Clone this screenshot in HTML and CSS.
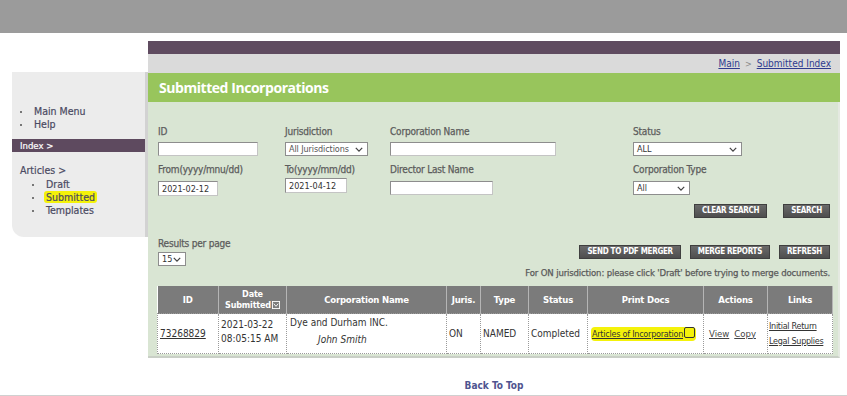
FILE: index.html
```html
<!DOCTYPE html>
<html>
<head>
<meta charset="utf-8">
<title>Submitted Incorporations</title>
<link rel="stylesheet" href="styles.css">
</head>
<body>
<div class="topbar"></div>
<div class="layout">
  <aside class="sidebar">
    <ul class="menu">
      <li>Main Menu</li>
      <li>Help</li>
    </ul>
    <div class="index-bar">Index &gt;</div>
    <div class="articles">Articles &gt;</div>
    <ul class="submenu">
      <li>Draft</li>
      <li><span class="hl">Submitted</span></li>
      <li>Templates</li>
    </ul>
  </aside>
  <main class="panel">
    <div class="purple"></div>
    <div class="crumbs"><a href="#">Main</a><span class="sep">&gt;</span><a href="#">Submitted Index</a></div>
    <h1 class="title">Submitted Incorporations</h1>
    <div class="formarea">
      <div class="grid">
        <label class="lbl">ID</label>
        <label class="lbl">Jurisdiction</label>
        <label class="lbl">Corporation Name</label>
        <label class="lbl">Status</label>

        <div class="cell"><span class="input w100"></span></div>
        <div class="cell"><span class="select w83 small">All Jurisdictions<svg class="chev" viewBox="0 0 10 6"><path d="M1 1 L5 5 L9 1" /></svg></span></div>
        <div class="cell"><span class="input w166"></span></div>
        <div class="cell"><span class="select w109">ALL<svg class="chev" viewBox="0 0 10 6"><path d="M1 1 L5 5 L9 1" /></svg></span></div>

        <label class="lbl">From(yyyy/mnu/dd)</label>
        <label class="lbl">To(yyyy/mm/dd)</label>
        <label class="lbl">Director Last Name</label>
        <label class="lbl">Corporation Type</label>

        <div class="cell"><span class="input w60 val">2021-02-12</span></div>
        <div class="cell up"><span class="input w62 val">2021-04-12</span></div>
        <div class="cell"><span class="input w103"></span></div>
        <div class="cell"><span class="select w57">All<svg class="chev" viewBox="0 0 10 6"><path d="M1 1 L5 5 L9 1" /></svg></span></div>
      </div>
      <div class="btnrow search-row">
        <span class="btn">CLEAR SEARCH</span>
        <span class="btn">SEARCH</span>
      </div>
      <div class="results">
        <div class="rpp">
          <div class="lbl">Results per page</div>
          <span class="select w28">15<svg class="chev" viewBox="0 0 10 6"><path d="M1 1 L5 5 L9 1" /></svg></span>
        </div>
        <div class="btnrow merge-row">
          <span class="btn">SEND TO PDF MERGER</span>
          <span class="btn">MERGE REPORTS</span>
          <span class="btn">REFRESH</span>
        </div>
      </div>
      <p class="note">For ON jurisdiction: please click 'Draft' before trying to merge documents.</p>
      <table class="tbl">
        <colgroup>
          <col class="c-id"><col class="c-date"><col class="c-corp"><col class="c-juris"><col class="c-type"><col class="c-status"><col class="c-docs"><col class="c-actions"><col class="c-links">
        </colgroup>
        <thead>
          <tr>
            <th>ID</th>
            <th class="date">Date<br>Submitted<svg class="sort" viewBox="0 0 9 9"><rect x="0.5" y="0.5" width="8" height="8" fill="none" stroke="#fff" stroke-width="1"/><path d="M2 3 L4.5 6 L7 3" fill="none" stroke="#fff" stroke-width="1"/></svg></th>
            <th>Corporation Name</th>
            <th>Juris.</th>
            <th>Type</th>
            <th>Status</th>
            <th>Print Docs</th>
            <th>Actions</th>
            <th>Links</th>
          </tr>
        </thead>
        <tbody>
          <tr>
            <td><a href="#">73268829</a></td>
            <td><span class="dtin">2021-03-22<br>08:05:15 AM</span></td>
            <td class="corp">Dye and Durham INC.<br><em>John Smith</em></td>
            <td>ON</td>
            <td>NAMED</td>
            <td>Completed</td>
            <td class="docs"><span class="hl2"><a href="#">Articles of Incorporation</a><span class="chk"></span></span></td>
            <td class="actions"><a href="#">View</a><a href="#">Copy</a></td>
            <td class="links"><a href="#">Initial Return</a><br><a href="#">Legal Supplies</a></td>
          </tr>
        </tbody>
      </table>
    </div>
    <div class="backtop"><a href="#">Back To Top</a></div>
  </main>
</div>
<div class="bottomline"></div>
</body>
</html>
```

FILE: styles.css
```css
html, body {
  margin: 0;
  padding: 0;
  background: #ffffff;
  font-family: "DejaVu Sans Condensed", "DejaVu Sans", sans-serif;
  font-stretch: condensed;
  color: #3e3e3e;
}

.topbar {
  height: 33px;
  background: #9b9b9b;
}

.layout {
  display: flex;
  align-items: flex-start;
  padding-left: 12px;
  margin-top: 8px;
}

/* Sidebar */
.sidebar {
  width: 133px;
  height: 165px;
  margin-top: 31px;
  background: #ececec;
  border-right: 3px solid #d2d2d2;
  border-bottom-left-radius: 12px;
  font-size: 10.5px;
  color: #4a4a62;
  -webkit-text-stroke: 0.2px #4a4a62;
}

.menu {
  list-style: none;
  margin: 0;
  padding: 33px 0 0 8px;
}

.menu li,
.submenu li {
  position: relative;
  line-height: 13px;
  padding-left: 14px;
}

.menu li::before,
.submenu li::before {
  content: "";
  position: absolute;
  left: 0;
  top: 6px;
  width: 2px;
  height: 2px;
  background: #777;
}

.index-bar {
  margin-top: 8px;
  height: 13px;
  line-height: 13px;
  background: #5e4a5f;
  color: #ffffff;
  -webkit-text-stroke: 0.2px #ffffff;
  font-size: 9.5px;
  padding-left: 8px;
}

.articles {
  padding-left: 8px;
  margin-top: 12px;
  line-height: 13px;
}

.submenu {
  list-style: none;
  margin: 0;
  padding: 1px 0 0 20px;
}

.hl {
  background: #f4f20a;
  border-radius: 3px;
  padding: 0 2px;
  margin-left: -2px;
}

/* Main panel */
.panel {
  width: 692px;
}

.purple {
  height: 13px;
  background: #5f4b60;
}

.crumbs {
  height: 19px;
  background: #dadada;
  text-align: right;
  font-size: 10px;
  line-height: 19px;
  padding-right: 9px;
}

.crumbs a {
  color: #2e3b8f;
}

.crumbs .sep {
  color: #888;
  margin: 0 5px;
  font-size: 9px;
}

.title {
  margin: 0;
  height: 29px;
  line-height: 30px;
  background: #98c55c;
  color: #ffffff;
  font-size: 14px;
  font-weight: bold;
  padding-left: 11px;
  font-family: "Open Sans", "DejaVu Sans", sans-serif;
  font-stretch: normal;
  letter-spacing: -0.45px;
}

.formarea {
  background: #d9e5d3;
  border-right: 2px solid #e4e9e1;
  border-bottom: 2px solid #c9cfc6;
  padding: 23px 8px 2px 10px;
}

.grid {
  display: grid;
  grid-template-columns: 127px 105px 243px 1fr;
  grid-template-rows: 13px 18px 20px 22px;
  align-items: start;
}

.lbl {
  font-size: 10px;
  color: #5c5c5c;
  -webkit-text-stroke: 0.25px #5c5c5c;
  line-height: 13px;
  letter-spacing: -0.2px;
}

.grid .lbl:nth-child(n+9) {
  margin-top: 7px;
}

.cell {
  padding-top: 4px;
}

.grid .cell:nth-child(n+13) {
  padding-top: 5px;
}

.grid .cell.up {
  padding-top: 2px;
}

.input,
.select {
  display: flex;
  align-items: center;
  box-sizing: border-box;
  height: 14px;
  background: #ffffff;
  border: 1px solid #8d8d8d;
  border-right-color: #c4c4c4;
  border-bottom-color: #c4c4c4;
  font-size: 9px;
  color: #333;
  padding-left: 3px;
}

.input.val {
  height: 15px;
}

.select {
  justify-content: space-between;
  padding-right: 4px;
  border-color: #8d8d8d;
}

.select.small {
  font-size: 9px;
  color: #555;
  letter-spacing: -0.1px;
}

.chev {
  width: 8px;
  height: 5px;
  fill: none;
  stroke: #444;
  stroke-width: 1.6;
  flex: none;
}

.w100 { width: 100px; }
.w83 { width: 83px; }
.w166 { width: 166px; }
.w109 { width: 109px; }
.w60 { width: 60px; }
.w62 { width: 62px; }
.w103 { width: 103px; }
.w57 { width: 57px; }
.w28 { width: 28px; }

.btnrow {
  display: flex;
  justify-content: flex-end;
}

.btn {
  display: inline-block;
  height: 12px;
  line-height: 12px;
  background: linear-gradient(#6a6a6a, #4e4e4e);
  border: 1px solid #3f3f3f;
  color: #ffffff;
  font-size: 8px;
  font-weight: bold;
  padding: 0 7px;
  letter-spacing: -0.3px;
}

.search-row {
  gap: 16px;
  margin-top: 6px;
}

.results {
  display: flex;
  justify-content: space-between;
  align-items: flex-start;
  margin-top: 19px;
}

.rpp .select {
  margin-top: 2px;
}

.merge-row {
  gap: 9px;
  margin-top: 8px;
}

.note {
  margin: 1px 0 0 0;
  text-align: right;
  font-size: 9.5px;
  color: #5a5a5a;
  -webkit-text-stroke: 0.25px #5a5a5a;
  line-height: 12px;
  letter-spacing: -0.15px;
}

/* Table */
.tbl {
  margin-top: 7px;
  width: 675px;
  margin-left: -1px;
  border-collapse: collapse;
  table-layout: fixed;
  background: #ffffff;
}

.c-id { width: 61px; }
.c-date { width: 68px; }
.c-corp { width: 160px; }
.c-juris { width: 34px; }
.c-type { width: 48px; }
.c-status { width: 59px; }
.c-docs { width: 116px; }
.c-actions { width: 64px; }
.c-links { width: 65px; }

.tbl th {
  height: 27px;
  background: #7b7b7b;
  color: #ffffff;
  font-size: 9.5px;
  font-weight: bold;
  border-right: 1px solid #b5b5b5;
  padding: 0;
  line-height: 11px;
  letter-spacing: -0.2px;
}

.tbl th.date {
  font-size: 9px;
}

.sort {
  width: 8px;
  height: 8px;
  vertical-align: -1px;
  margin-left: 1px;
}

.tbl td {
  height: 37px;
  border: 1px dotted #9a9a9a;
  font-size: 10px;
  color: #333;
  padding: 0 2px;
  line-height: 14px;
  vertical-align: middle;
  white-space: nowrap;
  overflow: hidden;
}

.tbl td a {
  color: #333;
}

.dtin {
  display: block;
  margin-bottom: 4px;
}

.tbl td.corp {
  vertical-align: top;
  padding-top: 2px;
  padding-left: 3px;
}

.tbl td.corp em {
  display: inline-block;
  padding-left: 28px;
  margin-top: 3px;
}

.tbl td.docs {
  padding: 0 1px 0 3px;
}

.hl2 {
  background: #f4f20a;
  border-radius: 4px;
  padding: 2px 1px;
  font-size: 9px;
  letter-spacing: -0.25px;
}

.hl2 a {
  color: #333;
}

.chk {
  display: inline-block;
  width: 9px;
  height: 9px;
  border: 1px solid #333;
  border-radius: 2px;
  vertical-align: -1px;
  margin-left: 1px;
}

.tbl td.actions {
  font-size: 9.5px;
}

.tbl td.actions a {
  margin-left: 3px;
  margin-right: 2px;
  color: #444;
}

.tbl td.links {
  font-size: 9px;
  line-height: 15px;
  letter-spacing: -0.3px;
  padding: 0 1px;
}

.backtop {
  text-align: center;
  margin-top: 22px;
  font-size: 10px;
  font-weight: bold;
  line-height: 12px;
}

.backtop a {
  color: #4f5490;
  text-decoration: none;
}

.bottomline {
  margin-top: 3px;
  height: 2px;
  background: #d0d0d0;
}
```
